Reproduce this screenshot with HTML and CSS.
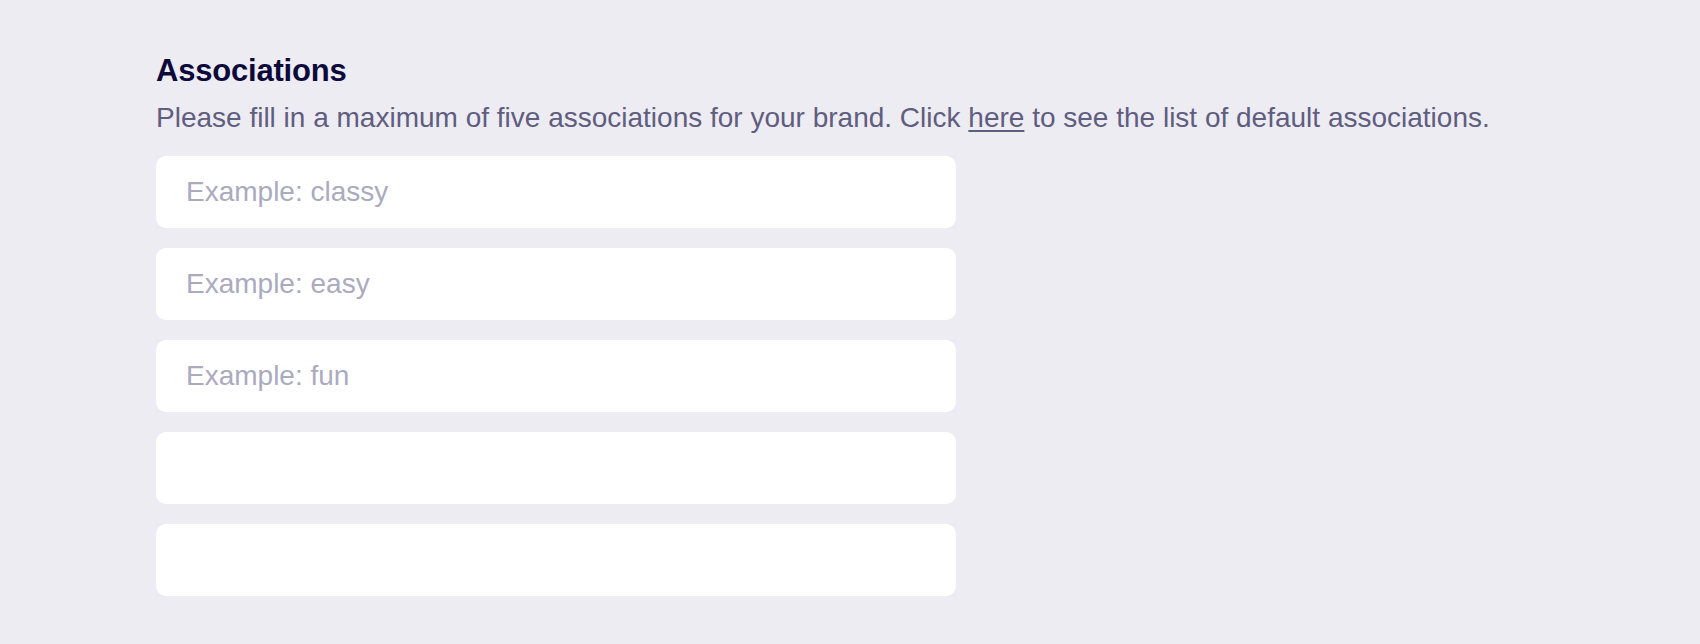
FILE: index.html
```html
<!DOCTYPE html>
<html lang="en">
<head>
<meta charset="utf-8">
<title>Associations</title>
<link rel="stylesheet" href="styles.css">
</head>
<body>
<main class="page">
  <section class="assoc">
    <h2 class="assoc-title">Associations</h2>
    <p class="assoc-desc">Please fill in a maximum of five associations for your brand. Click <a class="assoc-link" href="#">here</a> to see the list of default associations.</p>
    <div class="assoc-list">
      <input class="assoc-input" type="text" placeholder="Example: classy">
      <input class="assoc-input" type="text" placeholder="Example: easy">
      <input class="assoc-input" type="text" placeholder="Example: fun">
      <input class="assoc-input" type="text">
      <input class="assoc-input" type="text">
    </div>
  </section>
</main>
</body>
</html>
```
FILE: styles.css
```css
html, body {
  margin: 0;
  padding: 0;
  background: #edecf2;
  font-family: "Liberation Sans", Arial, sans-serif;
}
.page {
  padding: 51px 0 0 156px;
}
.assoc-title {
  margin: 0;
  font-size: 31px;
  line-height: 40px;
  font-weight: 700;
  color: #0c0a3a;
  letter-spacing: -0.2px;
}
.assoc-desc {
  margin: 9px 0 0;
  font-size: 28px;
  line-height: 36px;
  color: #5f5d80;
}
.assoc-link {
  color: inherit;
  text-decoration: underline;
  text-underline-offset: 3px;
  text-decoration-thickness: 2px;
}
.assoc-list {
  display: flex;
  flex-direction: column;
  gap: 20px;
  margin-top: 20px;
  width: 800px;
}
.assoc-input {
  box-sizing: border-box;
  height: 72px;
  width: 100%;
  border: none;
  border-radius: 10px;
  background: #ffffff;
  padding: 0 30px;
  font-family: "Liberation Sans", Arial, sans-serif;
  font-size: 28px;
  color: #0c0a3a;
  outline: none;
}
.assoc-input::placeholder {
  color: #abaabe;
  opacity: 1;
}
```
